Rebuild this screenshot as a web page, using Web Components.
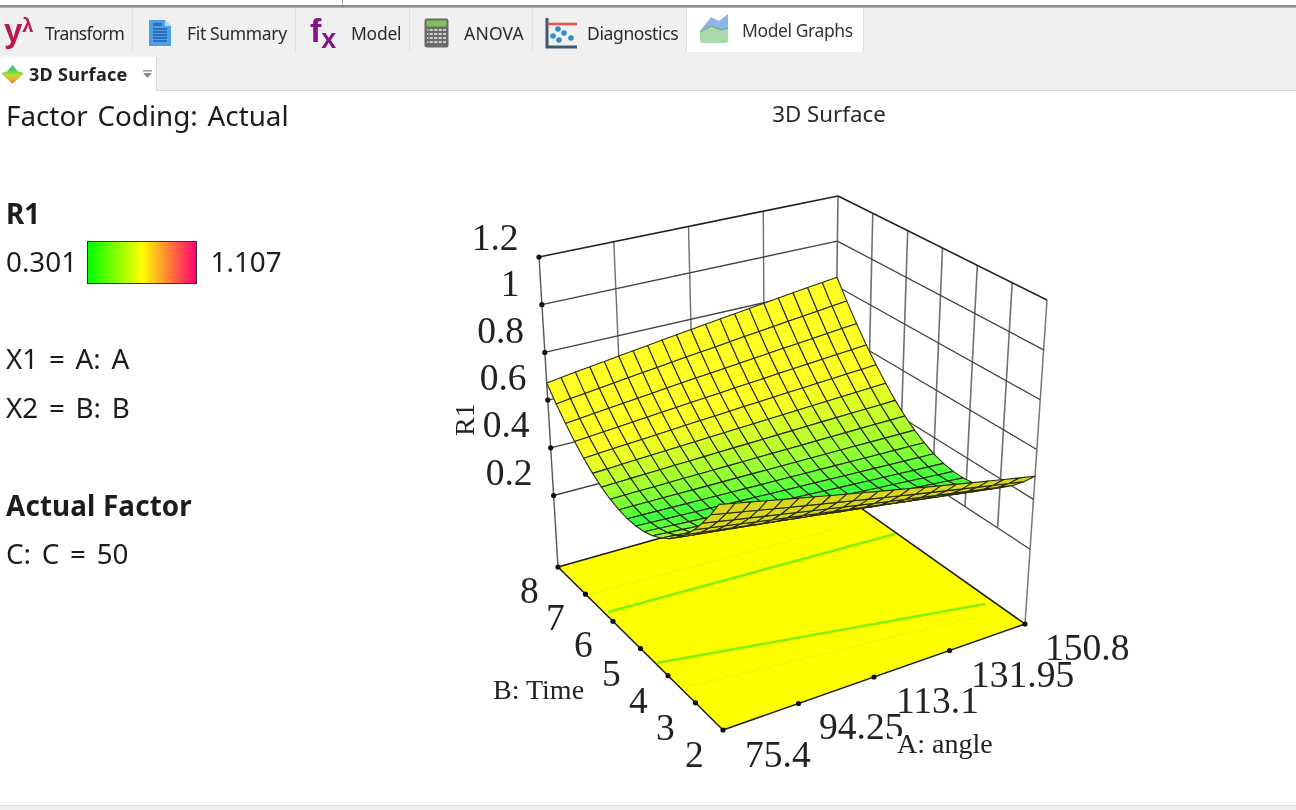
<!DOCTYPE html>
<html><head><meta charset="utf-8"><title>3D Surface</title>
<style>html,body{margin:0;padding:0;background:#fff;overflow:hidden}</style></head>
<body>
<template id="t-shell"><style>
:host{display:flex;flex-direction:column;width:1296px;height:810px;background:#fff;font-family:"Noto Sans","Open Sans",sans-serif;color:#1c1c1c;filter:blur(.35px);overflow:hidden}
.top{height:5px;flex:none;position:relative}
.top i{display:block;width:1px;height:5px;margin-left:342px;background:#aaa}
.rule{height:3px;flex:none;background:linear-gradient(#8c8c8c,#8c8c8c 60%,#c8c8c8)}
.main{flex:1;display:flex;min-height:0}
.foot{height:5px;flex:none;background:#efefef;border-top:1px solid #dcdcdc;box-sizing:border-box}
</style><div class="top"><i></i></div><div class="rule"></div><slot name="tabs"></slot><slot name="sub"></slot><div class="main"><slot></slot></div><div class="foot"></div></template>

<template id="t-tabs"><style>:host{display:flex;height:44px;flex:none;background:#f0f0f0;box-sizing:border-box}</style><slot></slot></template>

<template id="t-tab"><style>
:host{display:flex;align-items:center;box-sizing:border-box;height:44px;border-right:1px solid #e0e0e0;font-size:17.5px;color:#2b2b2b;white-space:nowrap;padding-top:6px}
:host([active]){background:#fff;padding-top:0;color:#333}
:host([active]) .i{margin-top:-2px}
.i{display:flex;align-items:center;justify-content:center;flex:none}
</style><span class="i"><slot name="icon"></slot></span><slot></slot></template>

<template id="t-sub"><style>
:host{display:flex;height:39px;flex:none;background:#f0f0f0;border-bottom:1px solid #d9d9d9;box-sizing:border-box}
.t{margin-top:5px;width:157px;height:34px;background:#fff;border-right:1px solid #dcdcdc;box-sizing:border-box;display:flex;align-items:center;font-weight:700;font-size:18px;letter-spacing:.3px;color:#222;padding-left:1px}
svg{flex:none}
.l{margin-left:5px}
.d{margin-left:14px}
</style><div class="t">
<svg width="23" height="20" viewBox="0 0 23 20"><defs><linearGradient id="g3" x1="0" y1="0" x2="0" y2="1"><stop offset="0" stop-color="#2fb7c9"/><stop offset=".3" stop-color="#54d04f"/><stop offset=".55" stop-color="#b9dc3a"/><stop offset=".8" stop-color="#f4a92a"/><stop offset="1" stop-color="#e45a2a"/></linearGradient></defs><path d="M0 9 6 7.500 11.500 1 17 7.500 23 9 17 15 11.500 19.500 6 15z" fill="url(#g3)"/></svg>
<span class="l"><slot></slot></span>
<svg class="d" width="11" height="10" viewBox="0 0 11 10"><rect x="1" y="1" width="9" height="1.5" fill="#999"/><path d="M1 4h9L5.500 9z" fill="#888"/></svg>
</div></template>

<template id="t-legend"><style>
:host{display:block;width:440px;flex:none;box-sizing:border-box;padding:0 0 0 6px;font-size:27.8px;line-height:48.45px;word-spacing:3.5px;color:#1c1c1c;white-space:nowrap}
.g{height:48.45px}
b{font-weight:700}
.scale{display:flex;align-items:center;height:48.45px}
.bar{width:110px;height:43px;box-sizing:border-box;border:1.5px solid #333;margin:2px 13.5px 0 10px;background:linear-gradient(90deg,#00ff00,#ffff00 50%,#ff0070)}
.head{margin-top:1px}
</style><div style="word-spacing:2.5px">Factor Coding: Actual</div><div class="g"></div><div class="head"><b>R1</b></div><div class="scale"><span>0.301</span><span class="bar"></span><span>1.107</span></div><div class="g"></div><div>X1 = A: A</div><div>X2 = B: B</div><div class="g"></div><div class="head"><b style="word-spacing:0;letter-spacing:.15px">Actual Factor</b></div><div>C: C = 50</div></template>

<x-shell>
 <x-tabs slot="tabs">
  <x-tab w="133" style="letter-spacing:-.63px">
   <span slot="icon" style="font:700 33px/1 'Liberation Sans',sans-serif;color:#b8184f;letter-spacing:0;margin:-6px 0 0 4px;display:block;width:41px">y<span style="font-size:20px;position:relative;top:-10px">λ</span></span>Transform</x-tab>
  <x-tab w="163" style="letter-spacing:-.35px">
   <svg slot="icon" width="24" height="28" viewBox="0 0 24 28" style="margin:0 15px 0 15px"><path d="M1 1h16l6 6v20H1z" fill="#4f9fe6"/><path d="M17 1l6 6h-6z" fill="#b9dcf8"/><path d="M5 4h9v3H5z" fill="#2d6fb8"/><path d="M5 10h14M5 13h14M5 16h14M5 19h14M5 22h14" stroke="#1c5ea6" stroke-width="1.4"/></svg>Fit Summary</x-tab>
  <x-tab w="114" style="letter-spacing:-.26px">
   <span slot="icon" style="font:700 34px/1 'Liberation Sans',sans-serif;color:#86148a;margin:-6px 0 0 14px;display:block;width:41px;letter-spacing:0">f<span style="font-size:27px;position:relative;top:6px">x</span></span>Model</x-tab>
  <x-tab w="123" style="letter-spacing:.2px">
   <svg slot="icon" width="25" height="30" viewBox="0 0 25 30" style="margin:0 15px 0 14px"><rect x=".5" y=".5" width="24" height="29" rx="2.5" fill="#6a6a6a"/><rect x="2.5" y="2.5" width="20" height="6" fill="#7fc25a"/><path d="M3 12h19M3 16h19M3 20h19M3 24h19" stroke="#cfcfcf" stroke-width="2"/><path d="M5 11v15M9.500 11v15M14 11v15M18.500 11v15" stroke="#6a6a6a" stroke-width="1.300"/></svg>ANOVA</x-tab>
  <x-tab w="154" style="letter-spacing:-.37px">
   <svg slot="icon" width="32" height="32" viewBox="0 0 32 32" style="margin:0 10px 0 12px"><path d="M2 1v29h30" fill="none" stroke="#3e5a70" stroke-width="3"/><path d="M3 7h29" stroke="#e2574c" stroke-width="2.600"/><g fill="#2f8fc4"><circle cx="13" cy="12" r="2.800"/><circle cx="8" cy="19" r="2.800"/><circle cx="19" cy="16" r="2.800"/><circle cx="14" cy="23" r="2.800"/><circle cx="26" cy="21" r="2.800"/></g></svg>Diagnostics</x-tab>
  <x-tab w="177" active style="letter-spacing:-.41px">
   <svg slot="icon" width="32" height="30" viewBox="0 0 32 30" style="margin:0 11px 0 12px"><path d="M1 17 12 3l8 4 9-7v20L1 22z" fill="#8fb4e8"/><path d="M1 18l11-6 11 4 6-2v13a2 2 0 0 1-2 2H3a2 2 0 0 1-2-2z" fill="#a9d8ab"/><path d="M1 18l11-6 11 4 6-2" fill="none" stroke="#6f9f86" stroke-width="1"/></svg>Model Graphs</x-tab>
 </x-tabs>
 <x-subtabs slot="sub">3D Surface</x-subtabs>
 <x-legend></x-legend>
 <x-plot></x-plot>
</x-shell>
<script>
function def(name,tpl,init){customElements.define(name,class extends HTMLElement{
  constructor(){super();const r=this.attachShadow({mode:'open'});r.appendChild(document.getElementById(tpl).content.cloneNode(true));}
  connectedCallback(){if(init)init(this)}
})}
def('x-shell','t-shell');
def('x-tabs','t-tabs');
def('x-tab','t-tab',el=>{el.style.width=el.getAttribute('w')+'px'});
def('x-subtabs','t-sub');
def('x-legend','t-legend');
customElements.define('x-plot',class extends HTMLElement{
 constructor(){super();this.attachShadow({mode:'open'});}
 connectedCallback(){
  const F=[723,731],R=[1025,625],B=[834,490],L=[558,568];
  const Ft=[717,386],Rt=[1047,301],Bt=[838,197],Lt=[539,258];
  const lerp=(a,b,t)=>[a[0]+(b[0]-a[0])*t,a[1]+(b[1]-a[1])*t];
  const bil=(p00,p10,p11,p01,u,v)=>lerp(lerp(p00,p10,u),lerp(p01,p11,u),v);
  const P=(u,v,z)=>lerp(bil(F,R,B,L,u,v),bil(Ft,Rt,Bt,Lt,u,v),(z+.1)/1.3);
  const s=p=>p[0].toFixed(1)+','+p[1].toFixed(1);
  const line=(a,b,c,w)=>`<line x1="${a[0].toFixed(1)}" y1="${a[1].toFixed(1)}" x2="${b[0].toFixed(1)}" y2="${b[1].toFixed(1)}" stroke="${c}" stroke-width="${w}"/>`;
  let o='';
  const zs=[1.2,1,.8,.6,.4,.2];
  for(let i=1;i<4;i++) o+=line(P(i/4,1,.2),P(i/4,1,1.2),'#6e6e6e',1.4);
  for(let i=1;i<6;i++) o+=line(P(1,1-i/6,.2),P(1,1-i/6,1.2),'#707070',1.6);
  o+=line(P(1,1,-.1),P(1,1,1.2),'#6e6e6e',1.6);
  o+=line(L,Lt,'#555',1.4);
  o+=line(R,Rt,'#777',1.5);
  zs.forEach((z,i)=>{const c=i==0?'#222':'#444',w=i==0?1.6:1.3;o+=line(P(0,1,z),P(1,1,z),c,w);o+=line(P(1,1,z),P(1,0,z),c,w)});
  o+=`<polygon points="${[F,R,B,L].map(s).join(' ')}" fill="#ffff00"/>`;
  o+=line([590,595],[835,530],'#f2fb00',2.4)+line([690,687],[980,617],'#f2fb00',2.4);
  o+=line([608,613],[895,535],'#82f000',2.6)+line([657,664],[985,605],'#82f000',2.6);
  o+=line(F,R,'#1a1a1a',1.5)+line(F,L,'#1a1a1a',1.5)+line(L,B,'#1a1a1a',1.5)+line(R,B,'#1a1a1a',1.5);
  let dots='';
  const dot=p=>`<circle cx="${p[0].toFixed(1)}" cy="${p[1].toFixed(1)}" r="2.600" fill="#111"/>`;
  zs.forEach(z=>dots+=dot(P(0,1,z)));
  for(let i=0;i<=6;i++) dots+=dot(lerp(L,F,i/6));
  for(let i=1;i<=4;i++) dots+=dot(lerp(F,R,i/4));
  o+=dots;
  const Z=(u,v)=>{const f=1-v;
    const e0=.385+1.3*(f-.47)*(f-.47), e1=.31+1.335*(f-.63)*(f-.63);
    return e0*(1-u)+e1*u};
  const N=20;
  const col=(u,v,under)=>{
    const f=1-v,f0=.47+.16*u,sc=.28+.14*u;
    const t=Math.max(0,Math.min(1,Math.abs(f-f0)/sc));
    let r=55+200*t,g=255,b=65-30*t;
    if(under){const k=.85;r=255*k;g=255*k;b=30}
    return `rgb(${r|0},${g|0},${b|0})`};
  let surf='';
  for(let j=N-1;j>=0;j--){
   for(let i=0;i<N;i++){
    const uv=[[i/N,j/N],[(i+1)/N,j/N],[(i+1)/N,(j+1)/N],[i/N,(j+1)/N]];
    const pts=uv.map(q=>P(q[0],q[1],Z(q[0],q[1])));
    let a=0;for(let k=0;k<4;k++){const p=pts[k],q=pts[(k+1)%4];a+=p[0]*q[1]-q[0]*p[1]}
    surf+=`<polygon points="${pts.map(s).join(' ')}" fill="${col((i+.5)/N,(j+.5)/N,a>0)}" stroke="#2a2a10" stroke-width="1.100" stroke-linejoin="round"/>`;
   }
  }
  o+=surf;
  const T=(x,y,t,a)=>`<text x="${x}" y="${y}" text-anchor="${a||'start'}">${t}</text>`;
  let tx='';
  [[518.5,251,'1.2'],[519.5,297,'1'],[524,344,'0.8'],[526.5,391,'0.6'],[529.5,438,'0.4'],[532.5,486,'0.2']].forEach(a=>tx+=T(a[0],a[1],a[2],'end'));
  [[520,604,'8'],[546,631,'7'],[574,658,'6'],[602,687,'5'],[629,714,'4'],[656,741,'3'],[685,768,'2'],[745,768,'75.4'],[819,740,'94.25'],[896,714,'113.1'],[971,688,'131.95'],[1045,661,'150.8']].forEach(a=>tx+=T(a[0],a[1],a[2]));
  this.shadowRoot.innerHTML=`<style>:host{display:block;flex:1;min-width:0}svg{display:block}
  .n{font:37.5px "Liberation Serif",serif;fill:#222}.a{font:28px "Liberation Serif",serif;fill:#222}
  .t{font:22.3px "Noto Sans","Open Sans",sans-serif;fill:#2a2a2a}</style>
  <svg width="856" height="713" viewBox="440 92 856 713">
  <text class="t" x="829" y="123" text-anchor="middle">3D Surface</text>
  ${o}<g class="n">${tx}</g>
  <rect x="893" y="737" width="104" height="26" fill="#fff"/>
  <g class="a"><text x="493" y="700">B: Time</text><text x="897" y="754">A: angle</text>
  <text transform="translate(474,437) rotate(-90)">R1</text></g></svg>`;
 }
});
</script>
</body></html>
